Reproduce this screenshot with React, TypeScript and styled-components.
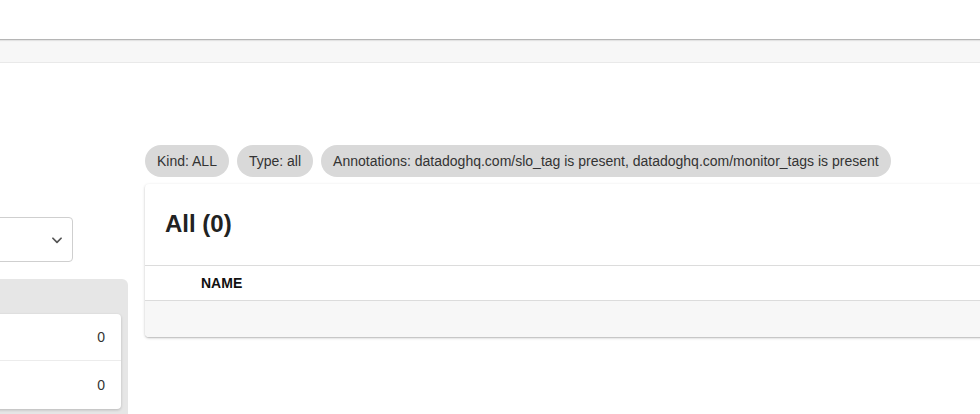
import React from "react";
import styled, { createGlobalStyle } from "styled-components";

const GlobalStyle = createGlobalStyle`
  html, body {
    margin: 0;
    padding: 0;
    background: #ffffff;
    overflow: hidden;
    font-family: "Liberation Sans", Arial, sans-serif;
    color: #333333;
  }
  * { box-sizing: border-box; }
`;

const Page = styled.div`
  width: 980px;
  height: 414px;
  overflow: hidden;
  display: flex;
  flex-direction: column;
`;

const TopBar = styled.div`
  height: 40px;
  flex-shrink: 0;
  background: #ffffff;
  border-bottom: 1px solid #b5b5b5;
  box-shadow: 0 1px 1px rgba(0, 0, 0, 0.08);
  position: relative;
  z-index: 1;
`;

const SubBar = styled.div`
  height: 23px;
  flex-shrink: 0;
  background: #f7f7f7;
  border-bottom: 1px solid #e9e9e9;
`;

const Main = styled.div`
  flex: 1;
  display: flex;
  gap: 17px;
  min-height: 0;
`;

const LeftColumn = styled.div`
  width: 300px;
  margin-left: -172px;
  flex-shrink: 0;
  padding-top: 154px;
  display: flex;
  flex-direction: column;
`;

const SelectBox = styled.div`
  flex-shrink: 0;
  width: 245px;
  height: 45px;
  border: 1px solid #cfcfcf;
  border-radius: 4px;
  background: #ffffff;
  display: flex;
  align-items: center;
  justify-content: flex-end;
  padding-right: 8px;
  color: #555555;
`;

const Panel = styled.div`
  margin-top: 17px;
  flex-shrink: 0;
  height: 160px;
  background: #e6e6e6;
  border-radius: 0 6px 0 0;
  padding: 35px 7px 0 0;
`;

const InnerCard = styled.div`
  background: #ffffff;
  border-radius: 0 4px 4px 0;
  box-shadow: 0 1px 3px rgba(0, 0, 0, 0.2);
`;

const CountRow = styled.div<{ $last?: boolean }>`
  height: ${(p) => (p.$last ? "48px" : "47px")};
  display: flex;
  align-items: center;
  justify-content: flex-end;
  padding-right: 16px;
  font-size: 14px;
  color: #333333;
  border-bottom: ${(p) => (p.$last ? "none" : "1px solid #ececec")};
`;

const RightColumn = styled.div`
  flex: 1;
  min-width: 900px;
  padding-top: 82px;
  display: flex;
  flex-direction: column;
`;

const ChipRow = styled.div`
  display: flex;
  gap: 8px;
`;

const Chip = styled.span`
  height: 32px;
  border-radius: 16px;
  background: #d9d9d9;
  padding: 0 12px;
  display: inline-flex;
  align-items: center;
  font-size: 14px;
  color: #333333;
  white-space: nowrap;
`;

const Card = styled.div`
  margin-top: 7px;
  background: #ffffff;
  border-radius: 4px 0 0 4px;
  box-shadow: 0 1px 3px rgba(0, 0, 0, 0.22), 0 1px 1px rgba(0, 0, 0, 0.1);
`;

const CardHeader = styled.div`
  height: 82px;
  display: flex;
  align-items: center;
  padding: 0 20px 2px;
  border-bottom: 1px solid #dcdcdc;
`;

const Title = styled.h2`
  margin: 0;
  font-size: 24px;
  font-weight: 700;
  color: #222222;
`;

const HeadRow = styled.div`
  height: 35px;
  display: flex;
  align-items: center;
  padding-left: 56px;
  border-bottom: 1px solid #dcdcdc;
  font-size: 14px;
  font-weight: 700;
  color: #111111;
`;

const EmptyRow = styled.div`
  height: 36px;
  background: #f7f7f7;
  border-radius: 0 0 0 4px;
`;

const Chevron = () => (
  <svg width="14" height="14" viewBox="0 0 24 24" fill="none" stroke="currentColor" strokeWidth="3" strokeLinecap="round" strokeLinejoin="round">
    <polyline points="5 9 12 16 19 9" />
  </svg>
);

export default function App() {
  return (
    <>
      <GlobalStyle />
      <Page>
        <TopBar />
        <SubBar />
        <Main>
          <LeftColumn>
            <SelectBox>
              <Chevron />
            </SelectBox>
            <Panel>
              <InnerCard>
                <CountRow>0</CountRow>
                <CountRow $last>0</CountRow>
              </InnerCard>
            </Panel>
          </LeftColumn>
          <RightColumn>
            <ChipRow>
              <Chip>Kind: ALL</Chip>
              <Chip>Type: all</Chip>
              <Chip>Annotations: datadoghq.com/slo_tag is present, datadoghq.com/monitor_tags is present</Chip>
            </ChipRow>
            <Card>
              <CardHeader>
                <Title>All (0)</Title>
              </CardHeader>
              <HeadRow>NAME</HeadRow>
              <EmptyRow />
            </Card>
          </RightColumn>
        </Main>
      </Page>
    </>
  );
}
